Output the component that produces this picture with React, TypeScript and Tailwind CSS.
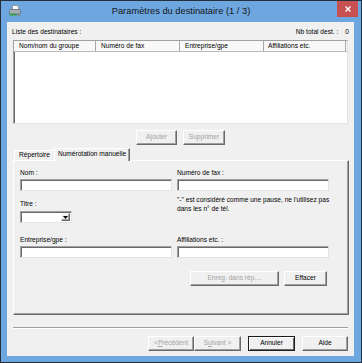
import React from 'react';

// Classic Win32 dialog: "Paramètres du destinataire"

const raised =
  'bg-[#f0f0f0] border border-t-white border-l-white border-r-[#696969] border-b-[#696969] shadow-[inset_-1px_-1px_0_#a0a0a0]';
const sunken =
  'bg-white border border-t-[#a0a0a0] border-l-[#a0a0a0] border-r-[#e3e3e3] border-b-[#e3e3e3] shadow-[inset_1px_1px_0_#696969]';

function Btn({
  children,
  className,
  disabled,
  def,
}: {
  children: React.ReactNode;
  className: string;
  disabled?: boolean;
  def?: boolean;
}) {
  const frame = def
    ? 'bg-[#f0f0f0] border border-[#1c1c1c] shadow-[inset_1px_1px_0_#fff,inset_-1px_-1px_0_#696969]'
    : raised;
  return (
    <div
      className={`h-[15px] shrink-0 flex items-center justify-center whitespace-nowrap ${frame} ${
        disabled ? 'text-[#a3a3a3]' : 'text-black'
      } ${className}`}
    >
      {children}
    </div>
  );
}

function FaxIcon() {
  return (
    <svg width="12" height="11" viewBox="0 0 12 11">
      <path d="M3.5 0.5h4.5l1.5 1.5v3h-6z" fill="#fdfdfd" stroke="#8c8c8c" strokeWidth="0.8" />
      <rect x="0.5" y="4.5" width="11" height="4.5" rx="1" fill="#a7afb6" stroke="#66717a" strokeWidth="0.8" />
      <rect x="0.5" y="8.6" width="7" height="2" fill="#3d9f46" />
      <rect x="8" y="8.6" width="3.5" height="2" fill="#7b858d" />
    </svg>
  );
}

function Field({ label, className = 'w-[152px]' }: { label: string; className?: string }) {
  return (
    <div className="flex flex-col">
      <div className="h-[8px] leading-[8px] whitespace-nowrap">{label}</div>
      <div className={`mt-[2px] h-[12px] ${sunken} ${className}`} />
    </div>
  );
}

export default function App() {
  return (
    <div className="w-[362px] h-[363px] bg-[#6ea6df] border border-[#24313d] flex flex-col font-['Liberation_Sans',Tahoma,Arial,sans-serif] text-[6.6px] leading-none text-black">
      {/* Title bar */}
      <div className="h-[21px] shrink-0 grid grid-cols-[40px_1fr_40px]">
        <div className="pl-[8px] pt-[4px]">
          <FaxIcon />
        </div>
        <div className="flex items-center justify-center text-[9.3px] text-[#161616] whitespace-nowrap">
          Paramètres du destinataire (1 / 3)
        </div>
        <div className="flex justify-end pr-[3px]">
          <div className="w-[21px] h-[16px] bg-[#c75050] flex items-center justify-center">
            <svg width="6" height="6" viewBox="0 0 6 6">
              <path d="M0.5 0.5l5 5M5.5 0.5l-5 5" stroke="#fff" strokeWidth="1.4" />
            </svg>
          </div>
        </div>
      </div>

      {/* Client area */}
      <div className="ml-[6px] w-[347px] h-[334px] bg-[#f0f0f0] flex flex-col">
        <div className="mt-[6px] h-[8px] mx-[5px] flex justify-between items-center whitespace-nowrap">
          <span>Liste des destinataires :</span>
          <span className="flex gap-[7px]">
            <span>Nb total dest. :</span>
            <span>0</span>
          </span>
        </div>

        {/* List view */}
        <div className={`mt-[4px] mx-[6px] h-[84px] ${sunken} flex flex-col`}>
          <div className="h-[11px] flex bg-[#f8f8f8] border-b border-[#b9b9b9] whitespace-nowrap">
            <div className="w-[82px] pl-[5px] flex items-center border-r border-[#a8a8a8]">Nom/nom du groupe</div>
            <div className="w-[84px] pl-[5px] flex items-center border-r border-[#a8a8a8]">Numéro de fax</div>
            <div className="w-[84px] pl-[5px] flex items-center border-r border-[#a8a8a8]">Entreprise/gpe</div>
            <div className="flex-1 pl-[4px] flex items-center border-r border-[#a8a8a8] mr-[1px]">Affiliations etc.</div>
          </div>
        </div>

        <div className="mt-[6px] flex justify-center gap-[6px]">
          <Btn className="w-[41px]" disabled>
            Ajouter
          </Btn>
          <Btn className="w-[42px]" disabled>
            Supprimer
          </Btn>
        </div>

        {/* Tabs */}
        <div className="mt-[3px] h-[12px] ml-[7px] flex items-end whitespace-nowrap">
          <div className="w-[40px] h-[10px] flex items-center justify-center border-t border-l border-white">
            Répertoire
          </div>
          <div className="relative z-10 -mb-px w-[76px] h-[13px] bg-[#f0f0f0] flex items-center justify-center pb-[1px] border-t border-l border-white border-r border-r-[#696969] shadow-[inset_-1px_0_0_#a0a0a0]">
            Numérotation manuelle
          </div>
        </div>

        {/* Tab panel */}
        <div className="ml-[6px] w-[336px] h-[155px] bg-[#f0f0f0] border-t border-l border-white border-r border-b border-r-[#696969] border-b-[#696969] shadow-[inset_-1px_-1px_0_#a0a0a0] pl-[6px] pt-[8px] flex flex-col">
          <div className="flex gap-[5px]">
            <Field label="Nom :" />
            <Field label="Numéro de fax :" />
          </div>

          <div className="flex gap-[5px] h-[31px] mt-[4px]">
            <div className="w-[152px] pt-[5px] flex flex-col">
              <div className="h-[8px] leading-[8px]">Titre :</div>
              <div className={`mt-[3px] w-[52px] h-[12px] ${sunken} flex justify-end p-[1px]`}>
                <div className={`w-[9px] h-full ${raised} flex items-center justify-center`}>
                  <svg width="5" height="3" viewBox="0 0 5 3">
                    <path d="M0 0h5L2.5 3z" fill="#000" />
                  </svg>
                </div>
              </div>
            </div>
            <div className="w-[152px] leading-[9px] whitespace-nowrap">
              "-" est considéré comme une pause, ne l'utilisez pas
              <br />
              dans les n° de tél.
            </div>
          </div>

          <div className="flex gap-[5px] mt-[10px]">
            <Field label="Entreprise/gpe :" />
            <Field label="Affiliations etc. :" />
          </div>

          <div className="mt-[13px] mr-[21px] flex justify-end gap-[5px]">
            <Btn className="w-[89px]" disabled>
              Enreg. dans rép....
            </Btn>
            <Btn className="w-[43px]">Effacer</Btn>
          </div>
        </div>

        <div className="mt-[12px] mx-[6px] border-t border-t-[#a0a0a0] border-b border-b-white" />

        <div className="mt-[7px] mr-[6px] flex justify-end">
          <Btn className="w-[46px]" disabled>
            &lt; <span className="underline">P</span>récédent
          </Btn>
          <Btn className="w-[47px]" disabled>
            S<span className="underline">u</span>ivant &gt;
          </Btn>
          <Btn className="w-[47px] ml-[7px]" def>
            Annuler
          </Btn>
          <Btn className="w-[46px] ml-[7px]">Aide</Btn>
        </div>
      </div>
    </div>
  );
}
